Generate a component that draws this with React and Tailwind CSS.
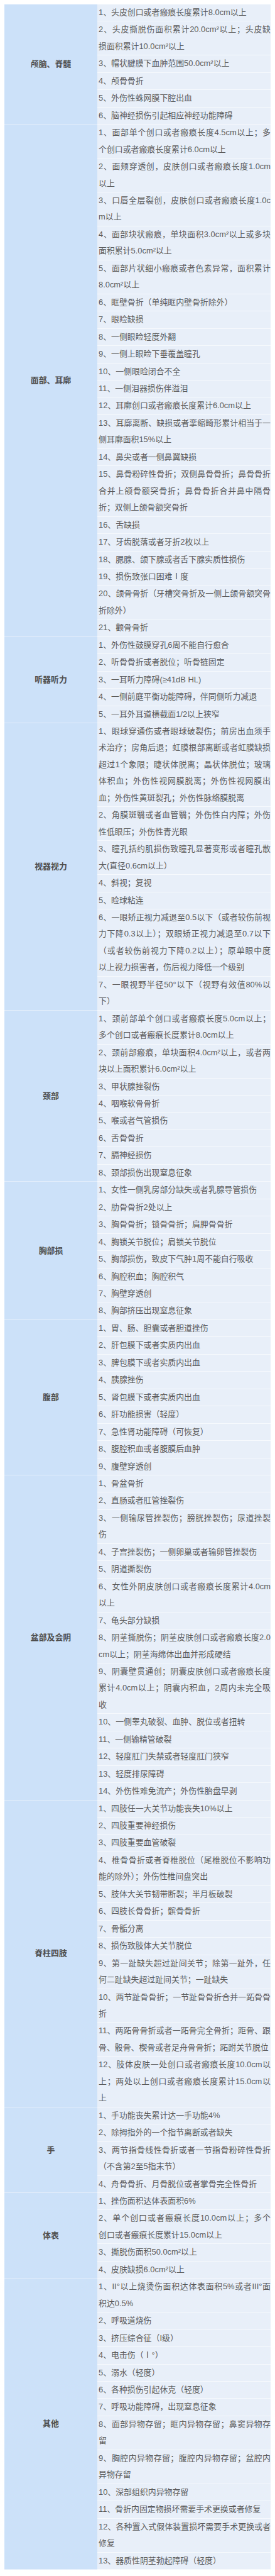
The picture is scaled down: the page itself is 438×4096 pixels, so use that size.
import React from 'react';

const groups = [
  {
    label: '颅脑、脊髓',
    items: [
      '1、头皮创口或者瘢痕长度累计8.0cm以上',
      '2、头皮撕脱伤面积累计20.0cm²以上；头皮缺|损面积累计10.0cm²以上',
      '3、帽状腱膜下血肿范围50.0cm²以上',
      '4、颅骨骨折',
      '5、外伤性蛛网膜下腔出血',
      '6、脑神经损伤引起相应神经功能障碍',
    ],
  },
  {
    label: '面部、耳廓',
    items: [
      '1、面部单个创口或者瘢痕长度4.5cm以上；多|个创口或者瘢痕长度累计6.0cm以上',
      '2、面颊穿透创，皮肤创口或者瘢痕长度1.0cm|以上',
      '3、口唇全层裂创，皮肤创口或者瘢痕长度1.0c|m以上',
      '4、面部块状瘢痕，单块面积3.0cm²以上或多块|面积累计5.0cm²以上',
      '5、面部片状细小瘢痕或者色素异常，面积累计|8.0cm²以上',
      '6、眶壁骨折（单纯眶内壁骨折除外）',
      '7、眼睑缺损',
      '8、一侧眼睑轻度外翻',
      '9、一侧上眼睑下垂覆盖瞳孔',
      '10、一侧眼睑闭合不全',
      '11、一侧泪器损伤伴溢泪',
      '12、耳廓创口或者瘢痕长度累计6.0cm以上',
      '13、耳廓离断、缺损或者挛缩畸形累计相当于一|侧耳廓面积15%以上',
      '14、鼻尖或者一侧鼻翼缺损',
      '15、鼻骨粉碎性骨折；双侧鼻骨骨折；鼻骨骨折|合并上颌骨额突骨折；鼻骨骨折合并鼻中隔骨|折；双侧上颌骨额突骨折',
      '16、舌缺损',
      '17、牙齿脱落或者牙折2枚以上',
      '18、腮腺、颌下腺或者舌下腺实质性损伤',
      '19、损伤致张口困难Ⅰ度',
      '20、颌骨骨折（牙槽突骨折及一侧上颌骨额突骨|折除外）',
      '21、颧骨骨折',
    ],
  },
  {
    label: '听器听力',
    items: [
      '1、外伤性鼓膜穿孔6周不能自行愈合',
      '2、听骨骨折或者脱位；听骨链固定',
      '3、一耳听力障碍(≥41dB HL)',
      '4、一侧前庭平衡功能障碍，伴同侧听力减退',
      '5、一耳外耳道横截面1/2以上狭窄',
    ],
  },
  {
    label: '视器视力',
    items: [
      '1、眼球穿通伤或者眼球破裂伤；前房出血须手|术治疗；房角后退；虹膜根部离断或者虹膜缺损|超过1个象限；睫状体脱离；晶状体脱位；玻璃|体积血；外伤性视网膜脱离；外伤性视网膜出|血；外伤性黄斑裂孔；外伤性脉络膜脱离',
      '2、角膜斑翳或者血管翳；外伤性白内障；外伤|性低眼压；外伤性青光眼',
      '3、瞳孔括约肌损伤致瞳孔显著变形或者瞳孔散|大(直径0.6cm以上）',
      '4、斜视；复视',
      '5、睑球粘连',
      '6、一眼矫正视力减退至0.5以下（或者较伤前视|力下降0.3以上）；双眼矫正视力减退至0.7以下|（或者较伤前视力下降0.2以上）；原单眼中度|以上视力损害者，伤后视力降低一个级别',
      '7、一眼视野半径50°以下（视野有效值80%以|下）',
    ],
  },
  {
    label: '颈部',
    items: [
      '1、颈前部单个创口或者瘢痕长度5.0cm以上；|多个创口或者瘢痕长度累计8.0cm以上',
      '2、颈前部瘢痕，单块面积4.0cm²以上，或者两|块以上面积累计6.0cm²以上',
      '3、甲状腺挫裂伤',
      '4、咽喉软骨骨折',
      '5、喉或者气管损伤',
      '6、舌骨骨折',
      '7、膈神经损伤',
      '8、颈部损伤出现窒息征象',
    ],
  },
  {
    label: '胸部损',
    items: [
      '1、女性一侧乳房部分缺失或者乳腺导管损伤',
      '2、肋骨骨折2处以上',
      '3、胸骨骨折；锁骨骨折；肩胛骨骨折',
      '4、胸锁关节脱位；肩锁关节脱位',
      '5、胸部损伤，致皮下气肿1周不能自行吸收',
      '6、胸腔积血；胸腔积气',
      '7、胸壁穿透创',
      '8、胸部挤压出现窒息征象',
    ],
  },
  {
    label: '腹部',
    items: [
      '1、胃、肠、胆囊或者胆道挫伤',
      '2、肝包膜下或者实质内出血',
      '3、脾包膜下或者实质内出血',
      '4、胰腺挫伤',
      '5、肾包膜下或者实质内出血',
      '6、肝功能损害（轻度）',
      '7、急性肾功能障碍（可恢复）',
      '8、腹腔积血或者腹膜后血肿',
      '9、腹壁穿透创',
    ],
  },
  {
    label: '盆部及会阴',
    items: [
      '1、骨盆骨折',
      '2、直肠或者肛管挫裂伤',
      '3、一侧输尿管挫裂伤；膀胱挫裂伤；尿道挫裂|伤',
      '4、子宫挫裂伤；一侧卵巢或者输卵管挫裂伤',
      '5、阴道撕裂伤',
      '6、女性外阴皮肤创口或者瘢痕长度累计4.0cm|以上',
      '7、龟头部分缺损',
      '8、阴茎撕脱伤；阴茎皮肤创口或者瘢痕长度2.0|cm以上；阴茎海绵体出血并形成硬结',
      '9、阴囊壁贯通创；阴囊皮肤创口或者瘢痕长度|累计4.0cm以上；阴囊内积血，2周内未完全吸|收',
      '10、一侧睾丸破裂、血肿、脱位或者扭转',
      '11、一侧输精管破裂',
      '12、轻度肛门失禁或者轻度肛门狭窄',
      '13、轻度排尿障碍',
      '14、外伤性难免流产；外伤性胎盘早剥',
    ],
  },
  {
    label: '脊柱四肢',
    items: [
      '1、四肢任一大关节功能丧失10%以上',
      '2、四肢重要神经损伤',
      '3、四肢重要血管破裂',
      '4、椎骨骨折或者脊椎脱位（尾椎脱位不影响功|能的除外）；外伤性椎间盘突出',
      '5、肢体大关节韧带断裂；半月板破裂',
      '6、四肢长骨骨折；髌骨骨折',
      '7、骨骺分离',
      '8、损伤致肢体大关节脱位',
      '9、第一趾缺失超过趾间关节；除第一趾外，任|何二趾缺失超过趾间关节；一趾缺失',
      '10、两节趾骨骨折；一节趾骨骨折合并一跖骨骨|折',
      '11、两跖骨骨折或者一跖骨完全骨折；距骨、跟|骨、骰骨、楔骨或者足舟骨骨折；跖跗关节脱位',
      '12、肢体皮肤一处创口或者瘢痕长度10.0cm以|上；两处以上创口或者瘢痕长度累计15.0cm以|上',
    ],
  },
  {
    label: '手',
    items: [
      '1、手功能丧失累计达一手功能4%',
      '2、除拇指外的一个指节离断或者缺失',
      '3、两节指骨线性骨折或者一节指骨粉碎性骨折|（不含第2至5指末节）',
      '4、舟骨骨折、月骨脱位或者掌骨完全性骨折',
    ],
  },
  {
    label: '体表',
    items: [
      '1、挫伤面积达体表面积6%',
      '2、单个创口或者瘢痕长度10.0cm以上；多个|创口或者瘢痕长度累计15.0cm以上',
      '3、撕脱伤面积50.0cm²以上',
      '4、皮肤缺损6.0cm²以上',
    ],
  },
  {
    label: '其他',
    items: [
      '1、II°以上烧烫伤面积达体表面积5%或者III°面|积达0.5%',
      '2、呼吸道烧伤',
      '3、挤压综合征（I级）',
      '4、电击伤（Ⅰ°）',
      '5、溺水（轻度）',
      '6、各种损伤引起休克（轻度）',
      '7、呼吸功能障碍，出现窒息征象',
      '8、面部异物存留；眶内异物存留；鼻窦异物存|留',
      '9、胸腔内异物存留；腹腔内异物存留；盆腔内|异物存留',
      '10、深部组织内异物存留',
      '11、骨折内固定物损坏需要手术更换或者修复',
      '12、各种置入式假体装置损坏需要手术更换或者|修复',
      '13、器质性阴茎勃起障碍（轻度）',
    ],
  },
];

function Item({ text }) {
  const lines = text.split('|');
  return (
    <div className="bg-[#e8eff9] border-b border-[#f6f9fd] pl-[2px]">
      {lines.map((ln, i) => (
        <div
          key={i}
          className={
            i < lines.length - 1
              ? 'leading-[26.46px] whitespace-nowrap text-justify [text-align-last:justify]'
              : 'leading-[26.46px] whitespace-nowrap'
          }
        >
          {ln}
        </div>
      ))}
    </div>
  );
}

export default function App() {
  return (
    <div className="bg-white min-h-screen pt-[7px] px-[7px] font-['Liberation_Sans','Noto_Sans_CJK_SC',sans-serif] text-[12.9px] text-[#5a5a5a]">
      <div className="flex flex-col w-[424px]">
        {groups.map((g) => (
          <div key={g.label} className="flex">
            <div className="w-[148px] shrink-0 bg-[#cce1f9] border-b border-[#e4eefb] flex items-center justify-center font-bold text-[#4e4e4e]">
              {g.label}
            </div>
            <div className="flex-1 flex flex-col">
              {g.items.map((it) => (
                <Item key={it} text={it} />
              ))}
            </div>
          </div>
        ))}
      </div>
    </div>
  );
}
